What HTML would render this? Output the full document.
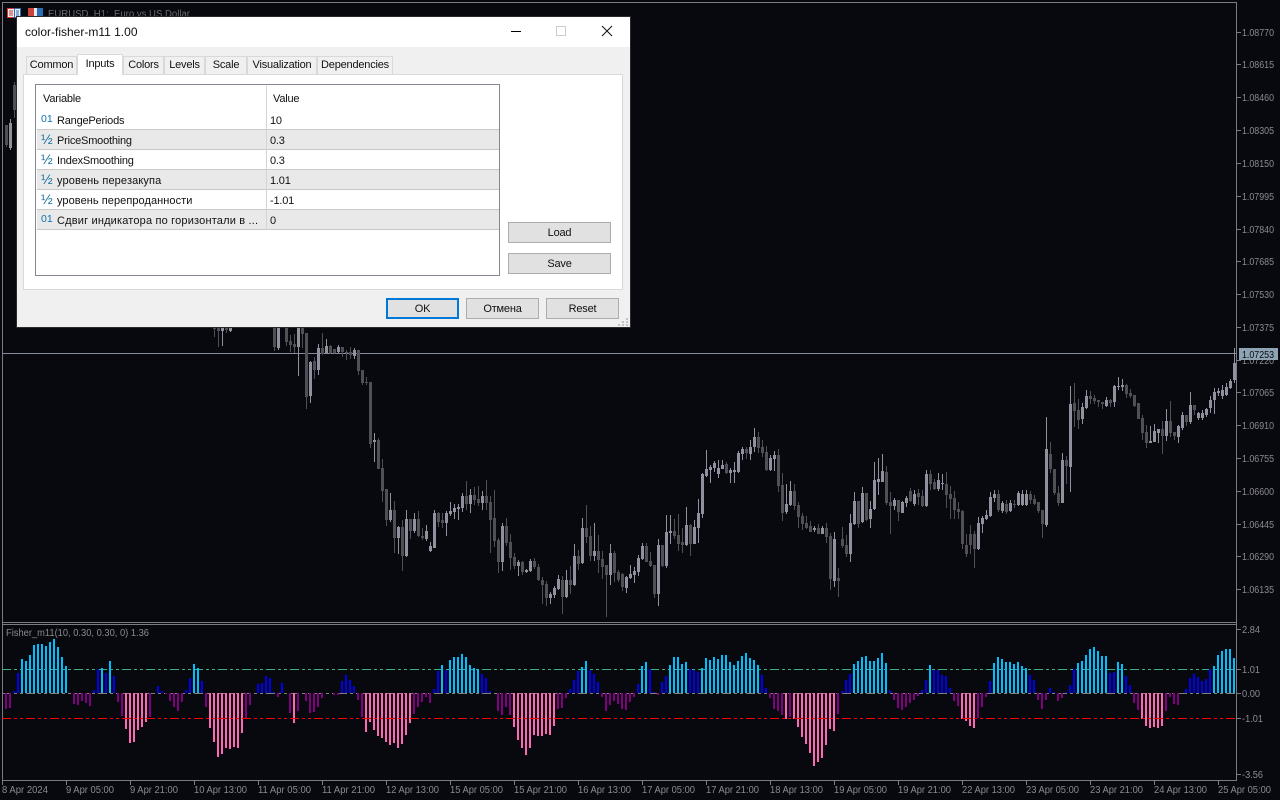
<!DOCTYPE html>
<html><head><meta charset="utf-8"><style>
html,body{margin:0;padding:0;background:#08090e;width:1280px;height:800px;overflow:hidden}
body{position:relative;font-family:"Liberation Sans","Noto Sans CJK JP",sans-serif}
svg{position:absolute;left:0;top:0}
text{font-family:"Liberation Sans",sans-serif;font-size:10px;fill:#8a8a90}
.d{position:absolute;left:17px;top:17px;width:613px;height:310px;background:#f0f0f0;box-shadow:0 0 0 1px #2b2b2e;font-size:11px;color:#111;letter-spacing:-.2px}
.d div{position:absolute;box-sizing:border-box;white-space:nowrap}
.t{background:#f0f0f0;border:1px solid #d9d9d9;border-bottom:0;text-align:center;line-height:17px;height:18px}
.r{left:1px;width:462px;height:20px;border-bottom:1px solid #c8c8c8}
.g{background:#e9e9e9}
.n{left:20px;top:4px;line-height:14px}
.v{left:233px;top:4px;line-height:14px}
.i{left:4px;top:1px;color:#176f9e;line-height:16px;font-size:14px}
.o{left:4px;top:3px;color:#0e74ad;font-size:10.5px;line-height:13px;letter-spacing:0}
.b{background:#e1e1e1;border:1px solid #adadad;text-align:center;line-height:20px;height:21px}
</style></head><body>
<svg width="1280" height="800" viewBox="0 0 1280 800" shape-rendering="crispEdges">
<g fill="none" stroke="#7b7b83">
<path d="M2.5 2.5H1236.5V780.5H2.5Z"/>
<path d="M2 622.5H1236M2 624.5H1236"/>
<path d="M1237 32.5h4M1237 64.5h4M1237 97.5h4M1237 130.5h4M1237 163.5h4M1237 196.5h4M1237 229.5h4M1237 261.5h4M1237 294.5h4M1237 327.5h4M1237 360.5h4M1237 392.5h4M1237 425.5h4M1237 458.5h4M1237 491.5h4M1237 524.5h4M1237 556.5h4M1237 589.5h4M1237 629.5h4M1237 669.5h4M1237 693.5h4M1237 718.5h4M1237 774.5h4"/>
<path d="M2.5 780v5M66.5 780v5M130.5 780v5M194.5 780v5M258.5 780v5M322.5 780v5M386.5 780v5M450.5 780v5M514.5 780v5M578.5 780v5M642.5 780v5M706.5 780v5M770.5 780v5M834.5 780v5M898.5 780v5M962.5 780v5M1026.5 780v5M1090.5 780v5M1154.5 780v5M1218.5 780v5"/>
</g>
<path d="M3 353.5H1236" stroke="#858d9a" fill="none"/>
<rect x="7.5" y="8.5" width="7" height="9" fill="#e9eef5" stroke="#d8322c"/>
<rect x="14.5" y="8.5" width="6" height="9" fill="#e9eef5" stroke="#2a6fb5"/>
<path d="M9 11h4M9 13h4M9 15h4" stroke="#d8322c" fill="none"/>
<path d="M16 11h3M16 13h3M16 15h3" stroke="#2a6fb5" fill="none"/>
<rect x="28" y="8" width="15" height="10" fill="#e9e9ee"/>
<rect x="28" y="8" width="6" height="9" fill="#c8443c"/>
<rect x="37" y="8" width="6" height="9" fill="#2a6fb5"/>
<g transform="translate(.5 0)" fill="none">
<g stroke="#4f4f55">
<path d="M6 125V147M14 82V118M214 327V337M218 327V347M226 327V333M274 327V351M286 327V346M290 335V352M294 334V353M302 327V348M306 333V409M314 357V379M322 333V355M330 345V354M334 349V354M342 347V357M346 350V360M350 347V359M358 350V375M362 370V385M366 377V385M370 382V448M378 438V469M382 459V502M386 489V526M394 501V553M402 520V571M410 519V539M418 511V537M422 528V540M438 512V527M442 513V528M466 481V510M474 487V505M478 486V506M486 480V510M490 496V553M494 490V547M498 538V573M506 518V546M510 534V570M514 553V569M522 561V575M534 558V569M538 564V581M542 577V604M546 581V606M562 576V614M570 566V594M578 550V570M586 505V543M590 526V561M598 535V573M602 551V579M606 565V617M614 551V582M618 570V582M622 573V591M646 543V562M650 552V567M654 565V598M662 545V567M674 519V539M678 514V551M682 528V553M690 524V556M726 462V474M746 447V459M758 432V453M762 440V457M766 446V471M778 449V492M782 473V521M794 484V510M798 502V528M802 513V530M806 516V529M810 521V532M818 524V534M826 523V543M830 533V590M838 568V597M842 527V548M846 535V557M858 501V528M866 493V521M886 466V505M890 492V534M898 500V521M910 488V502M918 489V505M922 490V507M930 470V490M934 479V490M946 472V508M950 486V519M954 491V519M958 502V519M962 510V549M966 534V557M970 525V554M974 531V568M998 490V512M1006 500V514M1014 500V508M1030 491V504M1034 495V505M1038 502V513M1042 510V538M1050 442V473M1054 469V495M1058 486V506M1066 456V484M1074 383V427M1078 399V429M1090 391V404M1094 395V404M1098 400V407M1102 402V409M1110 399V407M1126 384V398M1130 389V398M1134 395V407M1138 403V419M1142 415V440M1146 425V448M1162 421V454M1170 401V437M1174 432V440M1186 415V426M1194 405V415"/>
<path stroke-width="3" d="M6 125V145M14 85V110M214 327V329M218 327V331M226 327V330M274 327V347M286 327V342M290 341V345M294 344V347M302 327V334M306 333V397M314 361V370M322 348V354M330 346V353M334 349V353M342 347V352M346 352V353M350 352V355M358 350V371M362 370V383M366 382V383M370 382V444M378 440V469M382 468V491M386 489V520M394 510V538M402 527V556M410 519V531M418 519V536M422 536V538M438 513V522M442 520V523M466 496V504M474 495V500M478 499V503M486 496V503M490 502V520M494 518V541M498 540V562M506 526V543M510 542V558M514 557V566M522 562V572M534 561V567M538 567V580M542 580V585M546 584V598M562 580V597M570 580V585M578 556V564M586 528V537M590 536V556M598 551V560M602 559V567M606 565V575M614 553V573M618 572V580M622 574V587M646 546V562M650 561V566M654 565V594M662 545V566M674 531V536M678 535V544M682 542V545M690 525V544M726 464V473M746 449V453M758 437V448M762 447V453M766 452V470M778 455V486M782 485V513M794 491V506M798 505V517M802 516V524M806 523V528M810 526V532M818 528V534M826 528V537M830 536V579M838 578V581M842 539V546M846 545V554M858 501V524M866 493V520M886 472V503M890 502V506M898 500V512M910 491V501M918 493V497M922 496V506M930 474V484M934 482V489M946 484V495M950 494V499M954 498V510M958 509V512M962 511V544M966 545V554M970 534V545M974 534V549M998 494V510M1006 504V512M1014 504V505M1030 494V500M1034 499V504M1038 502V511M1042 510V524M1050 454V469M1054 469V493M1058 493V503M1066 460V466M1074 403V411M1078 410V420M1090 396V399M1094 398V401M1098 400V402M1102 402V404M1110 400V403M1126 385V394M1130 393V396M1134 395V406M1138 403V419M1142 418V433M1146 432V443M1162 429V436M1170 421V433M1174 432V436M1186 415V422M1194 405V410"/>
</g>
<g stroke="#90919e">
<path d="M10 119V150M222 327V346M230 327V332M278 327V350M298 327V376M310 361V403M318 344V375M326 339V354M338 345V353M354 348V359M374 433V462M390 493V522M398 526V554M406 510V557M414 513V533M426 525V541M430 542V552M434 510V548M446 511V536M450 502V516M454 504V519M458 504V520M462 493V512M470 489V513M482 491V510M502 523V571M518 560V576M526 569V573M530 559V572M550 592V604M554 586V598M558 575V590M566 570V598M574 544V586M582 518V564M594 523V561M610 544V585M626 576V593M630 565V579M634 567V583M638 555V576M642 543V560M658 539V606M666 515V568M670 515V544M686 507V546M694 520V544M698 499V543M702 473V518M706 450V477M710 465V483M714 461V472M718 460V478M722 460V469M730 468V483M734 462V483M738 451V473M742 447V460M750 440V460M754 428V452M770 455V471M774 451V471M786 484V514M790 481V506M814 526V532M822 526V534M834 532V587M850 514V562M854 492V525M862 487V523M870 501V528M874 462V510M878 458V495M882 454V482M894 498V510M902 501V513M906 496V507M914 490V506M926 470V507M938 473V491M942 474V490M978 517V550M982 516V533M986 510V520M990 492V517M994 490V502M1002 501V513M1010 500V512M1018 491V506M1022 490V506M1026 490V506M1046 417V527M1062 453V503M1070 386V492M1082 403V424M1086 390V409M1106 397V407M1114 385V407M1118 377V390M1122 379V391M1150 426V443M1154 424V442M1158 429V443M1166 409V441M1178 425V443M1182 412V430M1190 392V424M1198 412V420M1202 410V420M1206 408V417M1210 396V413M1214 388V414M1218 388V396M1222 385V399M1226 383V396M1230 379V389M1234 348V383"/>
<path stroke-width="3" d="M10 123V148M222 327V331M230 327V331M278 327V348M298 327V347M310 362V396M318 348V370M326 346V353M338 347V352M354 350V356M374 440V442M390 510V520M398 527V538M406 519V556M414 519V531M426 531V539M430 546V551M434 513V548M446 513V523M450 511V514M454 508V512M458 507V509M462 496V508M470 495V504M482 496V503M502 526V562M518 562V566M526 570V572M530 561V571M550 594V598M554 588V595M558 579V589M566 580V597M574 556V585M582 528V563M594 551V556M610 553V575M626 577V588M630 574V578M634 571V575M638 558V572M642 546V559M658 545V594M666 532V566M670 531V533M686 525V545M694 527V544M698 513V528M702 474V514M706 469V476M710 467V470M714 463V468M718 468V474M722 465V469M730 470V473M734 470V472M738 453V472M742 449V454M750 447V454M754 437V447M770 458V470M774 455V459M786 504V512M790 491V505M814 528V530M822 528V534M834 539V581M850 523V554M854 501V524M862 493V522M870 509V519M874 480V509M878 479V482M882 471V482M894 500V506M902 502V513M906 498V503M914 494V504M926 474V506M938 480V489M942 483V484M978 523V549M982 518V524M986 515V519M990 497V516M994 494V498M1002 503V511M1010 503V511M1018 493V505M1022 494V505M1026 494V505M1046 449V525M1062 460V503M1070 404V467M1082 407V419M1086 396V408M1106 400V406M1114 386V402M1118 386V387M1122 385V387M1150 441V443M1154 431V442M1158 429V433M1166 421V436M1178 426V437M1182 415V428M1190 405V422M1198 413V418M1202 413V418M1206 409V415M1210 400V408M1214 392V400M1218 391V393M1222 390V396M1226 387V395M1230 381V388M1234 363V380"/>
</g>
</g>
<path d="M2 669.5H1236" stroke="#3cb37e" stroke-dasharray="9 3 3 3 3 3" fill="none"/>
<path d="M2 693.5H1236" stroke="#808080" stroke-dasharray="9 3 3 3 3 3" fill="none"/>
<g fill="none" stroke-width="2">
<path stroke="#00bfff" d="M22 693v-34M26 693v-32M30 693v-38M34 693v-48M38 693v-49M42 693v-49M46 693v-47M50 693v-51M54 693v-54M58 693v-46M62 693v-36M66 693v-27M102 693v-25M110 693v-32M194 693v-29M198 693v-25M442 693v-28M450 693v-33M454 693v-36M458 693v-36M462 693v-39M466 693v-36M470 693v-28M474 693v-25M478 693v-24M582 693v-26M586 693v-32M642 693v-27M646 693v-31M670 693v-28M674 693v-36M678 693v-36M682 693v-29M686 693v-31M702 693v-25M706 693v-35M710 693v-33M714 693v-36M718 693v-34M722 693v-38M726 693v-38M730 693v-31M734 693v-28M738 693v-32M742 693v-37M746 693v-40M750 693v-35M754 693v-33M758 693v-28M854 693v-29M858 693v-32M862 693v-36M866 693v-37M870 693v-32M874 693v-32M878 693v-35M882 693v-40M886 693v-30M930 693v-28M994 693v-30M998 693v-36M1002 693v-34M1006 693v-31M1010 693v-31M1014 693v-29M1018 693v-31M1022 693v-27M1026 693v-25M1078 693v-30M1082 693v-32M1086 693v-38M1090 693v-44M1094 693v-46M1098 693v-42M1102 693v-37M1106 693v-37M1118 693v-31M1122 693v-29M1214 693v-27M1218 693v-38M1222 693v-42M1226 693v-44M1230 693v-44M1234 693v-35"/>
<path stroke="#0000f0" d="M14 693v-2M18 693v-20M94 693v-3M98 693v-24M106 693v-20M114 693v-17M158 693v-7M162 693v-2M186 693v-3M190 693v-15M202 693v-12M258 693v-9M262 693v-10M266 693v-17M270 693v-15M274 693v-1M282 693v-10M342 693v-12M346 693v-18M350 693v-13M354 693v-7M434 693v-4M438 693v-22M446 693v-23M482 693v-19M486 693v-15M490 693v-2M570 693v-4M574 693v-13M578 693v-22M590 693v-23M594 693v-19M598 693v-11M638 693v-9M650 693v-24M654 693v-1M662 693v-11M666 693v-17M690 693v-24M694 693v-23M698 693v-21M762 693v-18M766 693v-5M842 693v-2M846 693v-13M850 693v-19M890 693v-3M922 693v-3M926 693v-13M934 693v-23M938 693v-23M942 693v-18M946 693v-17M950 693v-5M990 693v-12M1030 693v-18M1034 693v-13M1050 693v-5M1054 693v-1M1066 693v-1M1070 693v-8M1074 693v-24M1110 693v-20M1114 693v-21M1126 693v-17M1130 693v-8M1186 693v-4M1190 693v-15M1194 693v-19M1198 693v-16M1202 693v-12M1206 693v-14M1210 693v-24"/>
<path stroke="#800080" d="M6 693v16M10 693v15M74 693v11M78 693v12M82 693v8M86 693v10M90 693v13M118 693v9M122 693v23M150 693v24M166 693v1M170 693v8M174 693v14M178 693v18M182 693v9M206 693v14M246 693v25M250 693v12M278 693v4M290 693v20M298 693v18M306 693v8M310 693v20M314 693v19M318 693v14M322 693v5M334 693v2M338 693v2M358 693v7M362 693v24M414 693v21M418 693v14M422 693v9M426 693v4M430 693v10M498 693v18M502 693v22M506 693v14M510 693v22M558 693v16M562 693v15M566 693v5M602 693v4M606 693v18M610 693v12M614 693v8M618 693v11M622 693v16M626 693v17M630 693v9M634 693v4M658 693v2M770 693v5M774 693v16M778 693v18M782 693v22M790 693v24M838 693v21M894 693v7M898 693v15M902 693v17M906 693v14M910 693v10M914 693v7M918 693v3M954 693v8M958 693v13M978 693v25M982 693v14M986 693v4M1038 693v7M1042 693v16M1046 693v7M1058 693v8M1062 693v5M1134 693v10M1138 693v17M1166 693v18M1170 693v4M1174 693v11M1178 693v12"/>
<path stroke="#ff69b4" d="M126 693v36M130 693v50M134 693v49M138 693v37M142 693v34M146 693v29M210 693v35M214 693v49M218 693v64M222 693v61M226 693v55M230 693v56M234 693v54M238 693v55M242 693v40M294 693v30M366 693v39M370 693v29M374 693v37M378 693v43M382 693v45M386 693v49M390 693v52M394 693v50M398 693v55M402 693v51M406 693v42M410 693v30M514 693v34M518 693v47M522 693v55M526 693v62M530 693v55M534 693v42M538 693v43M542 693v43M546 693v41M550 693v42M554 693v33M786 693v26M794 693v26M798 693v34M802 693v44M806 693v51M810 693v60M814 693v73M818 693v69M822 693v65M826 693v52M830 693v36M834 693v38M962 693v26M966 693v28M970 693v33M974 693v35M1142 693v26M1146 693v33M1150 693v35M1154 693v34M1158 693v35M1162 693v33"/>
</g>
<path d="M2 718.5H1236" stroke="#ff0000" stroke-dasharray="9 3 3 3 3 3" fill="none"/>
<rect x="1239" y="348" width="39" height="12" fill="#8ea3b3"/>
<g shape-rendering="auto">
<text x="48" y="17" style="fill:#6a6a70" textLength="142" lengthAdjust="spacingAndGlyphs">EURUSD, H1:, Euro vs US Dollar</text>
<text x="1242" y="36" textLength="32" lengthAdjust="spacingAndGlyphs">1.08770</text>
<text x="1242" y="68" textLength="32" lengthAdjust="spacingAndGlyphs">1.08615</text>
<text x="1242" y="101" textLength="32" lengthAdjust="spacingAndGlyphs">1.08460</text>
<text x="1242" y="134" textLength="32" lengthAdjust="spacingAndGlyphs">1.08305</text>
<text x="1242" y="167" textLength="32" lengthAdjust="spacingAndGlyphs">1.08150</text>
<text x="1242" y="200" textLength="32" lengthAdjust="spacingAndGlyphs">1.07995</text>
<text x="1242" y="233" textLength="32" lengthAdjust="spacingAndGlyphs">1.07840</text>
<text x="1242" y="265" textLength="32" lengthAdjust="spacingAndGlyphs">1.07685</text>
<text x="1242" y="298" textLength="32" lengthAdjust="spacingAndGlyphs">1.07530</text>
<text x="1242" y="331" textLength="32" lengthAdjust="spacingAndGlyphs">1.07375</text>
<text x="1242" y="364" textLength="32" lengthAdjust="spacingAndGlyphs">1.07220</text>
<text x="1242" y="396" textLength="32" lengthAdjust="spacingAndGlyphs">1.07065</text>
<text x="1242" y="429" textLength="32" lengthAdjust="spacingAndGlyphs">1.06910</text>
<text x="1242" y="462" textLength="32" lengthAdjust="spacingAndGlyphs">1.06755</text>
<text x="1242" y="495" textLength="32" lengthAdjust="spacingAndGlyphs">1.06600</text>
<text x="1242" y="528" textLength="32" lengthAdjust="spacingAndGlyphs">1.06445</text>
<text x="1242" y="560" textLength="32" lengthAdjust="spacingAndGlyphs">1.06290</text>
<text x="1242" y="593" textLength="32" lengthAdjust="spacingAndGlyphs">1.06135</text>
<rect x="1239" y="348" width="39" height="12" fill="#8ea3b3"/>
<text x="1242" y="358" style="fill:#0a0d12" textLength="32" lengthAdjust="spacingAndGlyphs">1.07253</text>
<text x="1242" y="633" textLength="18" lengthAdjust="spacingAndGlyphs">2.84</text>
<text x="1242" y="673" textLength="18" lengthAdjust="spacingAndGlyphs">1.01</text>
<text x="1242" y="697" textLength="18" lengthAdjust="spacingAndGlyphs">0.00</text>
<text x="1242" y="722" textLength="21" lengthAdjust="spacingAndGlyphs">-1.01</text>
<text x="1242" y="778" textLength="21" lengthAdjust="spacingAndGlyphs">-3.56</text>
<text x="6" y="636" textLength="143" lengthAdjust="spacingAndGlyphs">Fisher_m11(10, 0.30, 0.30, 0) 1.36</text>
<text x="2" y="793" textLength="46" lengthAdjust="spacingAndGlyphs">8 Apr 2024</text>
<text x="66" y="793" textLength="48" lengthAdjust="spacingAndGlyphs">9 Apr 05:00</text>
<text x="130" y="793" textLength="48" lengthAdjust="spacingAndGlyphs">9 Apr 21:00</text>
<text x="194" y="793" textLength="53" lengthAdjust="spacingAndGlyphs">10 Apr 13:00</text>
<text x="258" y="793" textLength="53" lengthAdjust="spacingAndGlyphs">11 Apr 05:00</text>
<text x="322" y="793" textLength="53" lengthAdjust="spacingAndGlyphs">11 Apr 21:00</text>
<text x="386" y="793" textLength="53" lengthAdjust="spacingAndGlyphs">12 Apr 13:00</text>
<text x="450" y="793" textLength="53" lengthAdjust="spacingAndGlyphs">15 Apr 05:00</text>
<text x="514" y="793" textLength="53" lengthAdjust="spacingAndGlyphs">15 Apr 21:00</text>
<text x="578" y="793" textLength="53" lengthAdjust="spacingAndGlyphs">16 Apr 13:00</text>
<text x="642" y="793" textLength="53" lengthAdjust="spacingAndGlyphs">17 Apr 05:00</text>
<text x="706" y="793" textLength="53" lengthAdjust="spacingAndGlyphs">17 Apr 21:00</text>
<text x="770" y="793" textLength="53" lengthAdjust="spacingAndGlyphs">18 Apr 13:00</text>
<text x="834" y="793" textLength="53" lengthAdjust="spacingAndGlyphs">19 Apr 05:00</text>
<text x="898" y="793" textLength="53" lengthAdjust="spacingAndGlyphs">19 Apr 21:00</text>
<text x="962" y="793" textLength="53" lengthAdjust="spacingAndGlyphs">22 Apr 13:00</text>
<text x="1026" y="793" textLength="53" lengthAdjust="spacingAndGlyphs">23 Apr 05:00</text>
<text x="1090" y="793" textLength="53" lengthAdjust="spacingAndGlyphs">23 Apr 21:00</text>
<text x="1154" y="793" textLength="53" lengthAdjust="spacingAndGlyphs">24 Apr 13:00</text>
<text x="1218" y="793" textLength="53" lengthAdjust="spacingAndGlyphs">25 Apr 05:00</text>
</g>
</svg>
<div class="d">
<div style="left:0;top:0;width:613px;height:30px;background:#fff"></div>
<div style="left:8px;top:7px;font-size:12px;line-height:16px;letter-spacing:0">color-fisher-m11 1.00</div>
<svg style="left:0;top:0" width="613" height="30" shape-rendering="crispEdges"><path d="M494 14.5h10" stroke="#000" fill="none"/><rect x="539.5" y="9.5" width="9" height="9" fill="none" stroke="#ccc"/><path d="M585 9l10 10M595 9l-10 10" stroke="#111" fill="none" shape-rendering="auto"/></svg>
<div style="left:6px;top:57px;width:600px;height:216px;background:#fff;border:1px solid #d9d9d9"></div>
<div class="t" style="left:9px;top:39px;width:51px">Common</div>
<div class="t" style="left:60px;top:37px;width:46px;height:21px;background:#fff;line-height:18px;z-index:2">Inputs</div>
<div class="t" style="left:106px;top:39px;width:41px">Colors</div>
<div class="t" style="left:147px;top:39px;width:41px">Levels</div>
<div class="t" style="left:188px;top:39px;width:42px">Scale</div>
<div class="t" style="left:230px;top:39px;width:70px">Visualization</div>
<div class="t" style="left:300px;top:39px;width:76px">Dependencies</div>
<div style="left:18px;top:67px;width:465px;height:192px;background:#fff;border:1px solid #828790">
<div style="left:7px;top:7px;line-height:14px">Variable</div>
<div style="left:237px;top:7px;line-height:14px">Value</div>
<div style="left:230px;top:1px;width:1px;height:144px;background:#d4d4d4;z-index:2"></div>
<div class="r" style="top:25px"><div class="o">01</div><div class="n">RangePeriods</div><div class="v">10</div></div>
<div class="r g" style="top:45px"><div class="i">½</div><div class="n">PriceSmoothing</div><div class="v">0.3</div></div>
<div class="r" style="top:65px"><div class="i">½</div><div class="n">IndexSmoothing</div><div class="v">0.3</div></div>
<div class="r g" style="top:85px"><div class="i">½</div><div class="n" style="letter-spacing:.13px">уровень перезакупа</div><div class="v">1.01</div></div>
<div class="r" style="top:105px"><div class="i">½</div><div class="n" style="letter-spacing:.06px">уровень перепроданности</div><div class="v">-1.01</div></div>
<div class="r g" style="top:125px"><div class="o">01</div><div class="n" style="letter-spacing:.18px">Сдвиг индикатора по горизонтали в ...</div><div class="v">0</div></div>
</div>
<div class="b" style="left:491px;top:205px;width:103px">Load</div>
<div class="b" style="left:491px;top:236px;width:103px">Save</div>
<div class="b" style="left:369px;top:281px;width:73px;border:2px solid #0078d7;line-height:18px">OK</div>
<div class="b" style="left:449px;top:281px;width:73px">Отмена</div>
<div class="b" style="left:529px;top:281px;width:73px">Reset</div>
<svg style="left:600px;top:298px" width="13" height="12" shape-rendering="crispEdges"><path d="M9 3h2v2H9zM5 6h2v2H5zM9 6h2v2H9zM1 9h2v2H1zM5 9h2v2H5zM9 9h2v2H9z" fill="#c4c4c4"/></svg>
</div>
</body></html>
